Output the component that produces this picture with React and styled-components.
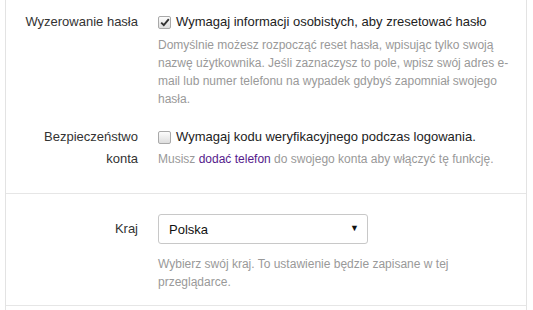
import React from "react";
import styled, { createGlobalStyle } from "styled-components";

const Global = createGlobalStyle`
  html, body { margin: 0; padding: 0; background: #fff; }
  body { font-family: "Liberation Sans", Arial, sans-serif; color: #333; }
`;

const Panel = styled.div`
  margin-left: 5px;
  width: 520px;
  min-height: 100vh;
  border-left: 1px solid #e3e3e3;
  border-right: 1px solid #e3e3e3;
`;

const Section = styled.div`
  border-bottom: 1px solid #e6e6e6;
  padding: ${(p) => p.$pad};
  display: flex;
  flex-direction: column;
  gap: ${(p) => p.$gap || "0px"};
`;

const Row = styled.div`
  display: grid;
  grid-template-columns: 132px 1fr;
  column-gap: 20px;
  align-items: start;
`;

const Label = styled.div`
  text-align: right;
  font-size: 13px;
  line-height: 22px;
  color: #333;
  padding-left: 8px;
  margin-top: ${(p) => p.$top || "0px"};
`;

const Field = styled.div`
  padding-right: 14px;
`;

const CheckLine = styled.label`
  display: flex;
  align-items: center;
  gap: 5px;
  font-size: 13px;
  line-height: 22px;
  color: #222;
`;

const Box = styled.span`
  width: 13px;
  height: 13px;
  box-sizing: border-box;
  border: 1px solid #a9a9a9;
  border-radius: 2px;
  background: linear-gradient(#fcfcfc, #dedede);
  display: inline-flex;
  align-items: center;
  justify-content: center;
  flex: none;
`;

const Help = styled.div`
  font-size: 12px;
  line-height: 18px;
  color: #999;
  margin-top: ${(p) => p.$top || "3px"};
`;

const Link = styled.a`
  color: #551a8b;
  text-decoration: none;
`;

const SelectWrap = styled.div`
  position: relative;
  width: 210px;
  height: 30px;
`;

const Select = styled.div`
  box-sizing: border-box;
  width: 100%;
  height: 100%;
  border: 1px solid #c8c8c8;
  border-radius: 3px;
  padding: 0 10px;
  display: flex;
  align-items: center;
  font-size: 13px;
  color: #111;
  background: #fff;
`;

const Arrow = styled.span`
  position: absolute;
  right: 9px;
  top: 9px;
  font-size: 9px;
  color: #111;
`;

function Checkbox({ checked }) {
  return (
    <Box>
      {checked && (
        <svg width="10" height="9" viewBox="0 0 10 9">
          <path d="M1.2 4.6 L3.8 7.2 L8.8 1.2" fill="none" stroke="#333" strokeWidth="1.9" />
        </svg>
      )}
    </Box>
  );
}

export default function App() {
  return (
    <>
      <Global />
      <Panel>
        <Section $pad="11px 0 23px" $gap="18px">
          <Row>
            <Label>Wyzerowanie hasła</Label>
            <Field>
              <CheckLine>
                <Checkbox checked />
                Wymagaj informacji osobistych, aby zresetować hasło
              </CheckLine>
              <Help>
                Domyślnie możesz rozpocząć reset hasła, wpisując tylko swoją nazwę użytkownika. Jeśli
                zaznaczysz to pole, wpisz swój adres e-mail lub numer telefonu na wypadek gdybyś
                zapomniał swojego hasła.
              </Help>
            </Field>
          </Row>
          <Row>
            <Label>Bezpieczeństwo konta</Label>
            <Field>
              <CheckLine>
                <Checkbox />
                Wymagaj kodu weryfikacyjnego podczas logowania.
              </CheckLine>
              <Help $top="2px">
                Musisz <Link href="#">dodać telefon</Link> do swojego konta aby włączyć tę funkcję.
              </Help>
            </Field>
          </Row>
        </Section>
        <Section $pad="20px 0 14px">
          <Row>
            <Label $top="4px">Kraj</Label>
            <Field>
              <SelectWrap>
                <Select>Polska</Select>
                <Arrow>▼</Arrow>
              </SelectWrap>
              <Help $top="11px">
                Wybierz swój kraj. To ustawienie będzie zapisane w tej przeglądarce.
              </Help>
            </Field>
          </Row>
        </Section>
      </Panel>
    </>
  );
}
